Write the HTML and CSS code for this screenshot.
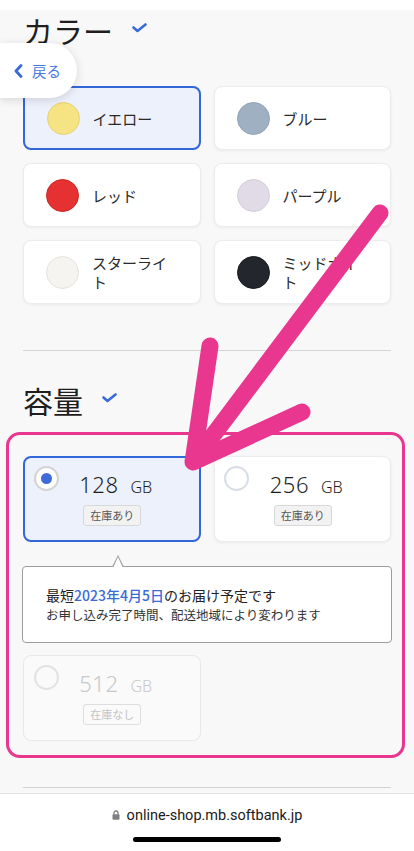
FILE: index.html
```html
<!DOCTYPE html>
<html lang="ja">
<head>
    <meta charset="UTF-8">
    <meta name="viewport" content="width=device-width, initial-scale=1.0">
    <title>カラー・容量の選択</title>
    <link rel="stylesheet" href="styles.css">
</head>
<body>
    <div class="status-strip"></div>

    <main class="page">
        <section class="option-section">
            <h2 class="section-title">カラー
                <svg class="title-check" width="15" height="10" viewBox="0 0 15 10"><polyline points="1.5,4.5 5.5,8 13.5,1.5" fill="none" stroke="#3a6bd8" stroke-width="2.6" stroke-linecap="round" stroke-linejoin="round"/></svg>
            </h2>
            <div class="option-grid color-grid">
                <div class="color-card is-selected"><span class="swatch swatch-yellow"></span><span class="color-name">イエロー</span></div>
                <div class="color-card"><span class="swatch swatch-blue"></span><span class="color-name">ブルー</span></div>
                <div class="color-card"><span class="swatch swatch-red"></span><span class="color-name">レッド</span></div>
                <div class="color-card"><span class="swatch swatch-purple"></span><span class="color-name">パープル</span></div>
                <div class="color-card"><span class="swatch swatch-starlight"></span><span class="color-name">スターライト</span></div>
                <div class="color-card"><span class="swatch swatch-midnight"></span><span class="color-name">ミッドナイト</span></div>
            </div>
        </section>

        <hr class="divider">

        <section class="option-section capacity-section">
            <h2 class="section-title">容量
                <svg class="title-check" width="15" height="10" viewBox="0 0 15 10"><polyline points="1.5,4.5 5.5,8 13.5,1.5" fill="none" stroke="#3a6bd8" stroke-width="2.6" stroke-linecap="round" stroke-linejoin="round"/></svg>
            </h2>
            <div class="option-grid capacity-list">
                <div class="capacity-card is-selected">
                    <span class="radio"><span class="radio-dot"></span></span>
                    <div class="capacity-body">
                        <div class="capacity-size"><span class="size-num">128</span><span class="size-unit">GB</span></div>
                        <span class="stock-badge">在庫あり</span>
                    </div>
                </div>
                <div class="capacity-card">
                    <span class="radio"></span>
                    <div class="capacity-body">
                        <div class="capacity-size"><span class="size-num">256</span><span class="size-unit">GB</span></div>
                        <span class="stock-badge">在庫あり</span>
                    </div>
                </div>
                <div class="delivery-note">
                    <p class="delivery-main">最短<span class="delivery-date">2023年4月5日</span>のお届け予定です</p>
                    <p class="delivery-sub">お申し込み完了時間、配送地域により変わります</p>
                </div>
                <div class="capacity-card is-disabled">
                    <span class="radio"></span>
                    <div class="capacity-body">
                        <div class="capacity-size"><span class="size-num">512</span><span class="size-unit">GB</span></div>
                        <span class="stock-badge">在庫なし</span>
                    </div>
                </div>
            </div>
        </section>

        <hr class="divider divider-bottom">
    </main>

    <a class="back-pill" href="#">
        <svg width="9" height="14" viewBox="0 0 9 14"><polyline points="7,1.5 2,7 7,12.5" fill="none" stroke="#3a6bd8" stroke-width="2.8" stroke-linecap="round" stroke-linejoin="round"/></svg>
        <span>戻る</span>
    </a>

    <svg class="annotation-arrow" width="414" height="851" viewBox="0 0 414 851">
        <g fill="none" stroke="#e9368f" stroke-width="17" stroke-linecap="round" stroke-linejoin="round">
            <line x1="380" y1="213" x2="196" y2="458"/>
            <polyline points="210,346 193,462 302,412"/>
        </g>
    </svg>

    <footer class="browser-bar">
        <div class="url-row">
            <svg width="8" height="10" viewBox="0 0 8 10"><path d="M2 4.5V3a2 2 0 0 1 4 0v1.5" fill="none" stroke="#808080" stroke-width="1.3"/><rect x="0.5" y="4.3" width="7" height="5.4" rx="1" fill="#808080"/></svg>
            <span>online-shop.mb.softbank.jp</span>
        </div>
        <div class="home-indicator"></div>
    </footer>
</body>
</html>
```

FILE: styles.css
```css
body {
    margin: 0;
    background-color: #f8f8f8;
    font-family: "Noto Sans CJK JP", sans-serif;
    color: #222;
}
.status-strip {
    height: 10px;
    background-color: #fff;
}
.page {
    padding: 0 23px;
}
.section-title {
    margin: 0;
    font-size: 30px;
    font-weight: 400;
    line-height: 40px;
    color: #1e1e1e;
    display: flex;
    align-items: center;
}
.title-check {
    margin-left: 19px;
    margin-top: -4px;
}
.option-grid {
    display: grid;
    grid-template-columns: 1fr 1fr;
    column-gap: 13px;
    row-gap: 13px;
    margin-top: 36px;
}
.color-card {
    height: 64px;
    box-sizing: border-box;
    display: flex;
    align-items: center;
    gap: 13px;
    padding-left: 22px;
    background-color: #fff;
    border: 1.5px solid #ececec;
    border-radius: 8px;
    box-shadow: 0 1px 3px rgba(0, 0, 0, 0.06);
}
.color-card.is-selected,
.capacity-card.is-selected {
    background-color: #edf1fb;
    border: 2px solid #3366d6;
    box-shadow: none;
}
.color-card.is-selected {
    padding-left: 21.5px;
}
.swatch {
    width: 33px;
    height: 33px;
    box-sizing: border-box;
    border-radius: 50%;
    flex-shrink: 0;
}
.swatch-yellow { background-color: #f5e384; border: 1px solid #e6d275; }
.swatch-blue { background-color: #a0b0c3; border: 1px solid #91a2b6; }
.swatch-red { background-color: #e53131; border: 1px solid #cf2424; }
.swatch-purple { background-color: #e1dbe8; border: 1px solid #d3cddb; }
.swatch-starlight { background-color: #f6f4f0; border: 1px solid #e6e3de; }
.swatch-midnight { background-color: #23272d; border: 1px solid #15181c; }
.color-name {
    font-size: 15px;
    line-height: 19px;
    max-width: 78px;
    color: #2a2a2a;
}
.divider {
    margin: 46px 0 0;
    border: none;
    border-top: 1px solid #d4d4d4;
}
.capacity-section .section-title {
    margin-top: 29px;
}
.capacity-list {
    position: relative;
    row-gap: 12px;
}
.capacity-list::before {
    content: "";
    position: absolute;
    top: -24px;
    left: -17px;
    right: -14px;
    bottom: -17px;
    border: 3px solid #e9368f;
    border-radius: 14px;
    pointer-events: none;
}
.capacity-card {
    height: 86px;
    box-sizing: border-box;
    display: grid;
    grid-template-columns: 25px 1fr 17px;
    padding: 8.5px 9.5px;
    background-color: #fff;
    border: 1.5px solid #ececec;
    border-radius: 8px;
    box-shadow: 0 1px 3px rgba(0, 0, 0, 0.06);
}
.capacity-card.is-selected {
    padding: 8px 9px;
}
.radio {
    width: 25px;
    height: 25px;
    box-sizing: border-box;
    border: 2px solid #d8dde6;
    border-radius: 50%;
    background-color: #fff;
    display: flex;
    align-items: center;
    justify-content: center;
}
.capacity-card.is-selected .radio {
    border-color: #d3d3d3;
}
.radio-dot {
    width: 11px;
    height: 11px;
    border-radius: 50%;
    background-color: #3d6bd9;
}
.capacity-body {
    display: flex;
    flex-direction: column;
    align-items: center;
    padding-top: 5px;
}
.capacity-size {
    font-family: "Noto Sans", sans-serif;
    line-height: 26px;
    color: #1e1e1e;
    white-space: nowrap;
}
.size-num {
    font-size: 22px;
    font-weight: 300;
    letter-spacing: 0.5px;
}
.size-unit {
    font-size: 16px;
    font-weight: 300;
    margin-left: 12px;
}
.stock-badge {
    margin-top: 5px;
    margin-right: 7px;
    padding: 0 6px;
    font-size: 11px;
    line-height: 19px;
    color: #555;
    background-color: #f2f2f2;
    border: 1px solid #d8d8d8;
    border-radius: 3px;
}
.capacity-card.is-disabled {
    background-color: #fafafa;
    border-color: #e8e8e8;
    box-shadow: none;
}
.is-disabled .radio {
    border-color: #e2e2e2;
    background-color: transparent;
}
.is-disabled .capacity-size {
    color: #c8c8c8;
}
.is-disabled .stock-badge {
    color: #c4c4c4;
    background-color: transparent;
    border-color: #dedede;
}
.delivery-note {
    grid-column: 1 / 3;
    position: relative;
    margin: 12px -1px 0;
    padding: 18px 23px 17px;
    background-color: #fff;
    border: 1px solid #9c9c9c;
    border-radius: 4px;
}
.delivery-note::before,
.delivery-note::after {
    content: "";
    position: absolute;
    left: 89px;
    width: 0;
    height: 0;
    border-left: 6px solid transparent;
    border-right: 6px solid transparent;
}
.delivery-note::before {
    top: -12px;
    border-bottom: 12px solid #9c9c9c;
}
.delivery-note::after {
    top: -10px;
    left: 90px;
    border-left-width: 5px;
    border-right-width: 5px;
    border-bottom: 11px solid #fff;
}
.delivery-note p {
    margin: 0;
    line-height: 20px;
}
.delivery-main {
    font-size: 14px;
    color: #222;
}
.delivery-date {
    color: #3a6ad6;
    font-weight: 500;
}
.delivery-sub {
    font-size: 12.5px;
    color: #333;
}
.back-pill {
    position: absolute;
    top: 43px;
    left: 0;
    width: 77px;
    height: 55px;
    box-sizing: border-box;
    padding-left: 14px;
    display: flex;
    align-items: center;
    gap: 9px;
    background-color: #fff;
    border-radius: 0 28px 28px 0;
    box-shadow: 0 2px 10px rgba(0, 0, 0, 0.14);
    text-decoration: none;
    color: #4a7be0;
    font-size: 14.5px;
}
.annotation-arrow {
    position: absolute;
    top: 0;
    left: 0;
    pointer-events: none;
}
.browser-bar {
    position: fixed;
    left: 0;
    right: 0;
    bottom: 0;
    height: 58px;
    box-sizing: border-box;
    padding-top: 11px;
    background-color: #fff;
    border-top: 1px solid #e4e4e4;
    display: flex;
    flex-direction: column;
    align-items: center;
}
.url-row {
    display: flex;
    align-items: center;
    gap: 7px;
    height: 20px;
    font-family: Roboto, sans-serif;
    font-size: 14.5px;
    color: #1a1a1a;
}
.home-indicator {
    margin-top: 12px;
    width: 148px;
    height: 5px;
    border-radius: 3px;
    background-color: #000;
}
```
